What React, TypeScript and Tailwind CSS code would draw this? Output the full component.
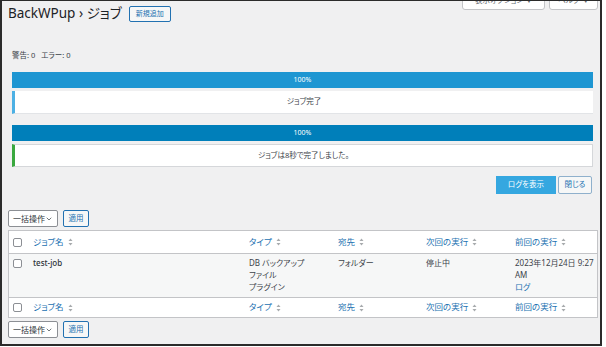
import { ChevronDown } from 'lucide-react';

const font = "font-['Noto_Sans','Noto_Sans_CJK_JP',sans-serif] [font-feature-settings:'palt']";

function SortIcon() {
  return (
    <svg width="5" height="8" viewBox="0 0 5 8" className="ml-[4px] inline-block">
      <path d="M2.5 0.5 L4.5 3 L0.5 3 Z" fill="#a7aaad" />
      <path d="M2.5 7.5 L4.5 5 L0.5 5 Z" fill="#a7aaad" />
    </svg>
  );
}

function Checkbox() {
  return <span className="block h-[9px] w-[9px] rounded-[2px] border border-[#8c8f94] bg-white" />;
}

const cols = 'grid grid-cols-[24px_216px_89px_88px_89px_1fr]';

function HeadRow({ footer }: { footer?: boolean }) {
  const heads = ['ジョブ名', 'タイプ', '宛先', '次回の実行', '前回の実行'];
  return (
    <div
      className={`${cols} items-center bg-white ${footer ? 'h-[20px] border-t border-[#c3c4c7]' : 'h-[23px] border-b border-[#c3c4c7]'}`}
    >
      <div className="flex pl-[4px]">
        <Checkbox />
      </div>
      {heads.map((h) => (
        <div key={h} className="flex items-center text-[8.5px] text-[#2271b1]">
          {h}
          <SortIcon />
        </div>
      ))}
    </div>
  );
}

function BulkActions() {
  return (
    <div className="flex h-[17px] items-stretch gap-[5px]">
      <div className="flex w-[50px] items-center justify-between rounded-[2px] border border-[#8c8f94] bg-white pl-[4px] pr-[4px] text-[8px] text-[#2c3338]">
        一括操作
        <ChevronDown size={8} strokeWidth={2} className="text-[#2c3338]" />
      </div>
      <div className="flex w-[26px] items-center justify-center rounded-[2px] border border-[#2271b1] bg-[#f6f7f7] text-[7.5px] text-[#2271b1]">
        適用
      </div>
    </div>
  );
}

export default function App() {
  return (
    <div className={`h-[347px] w-[606px] bg-white ${font}`}>
      <div className="relative flex h-[346px] w-[602px] flex-col overflow-hidden border-b-2 border-l-2 border-r-2 border-t border-[#2b2b2b] bg-[#f0f0f1] pl-[6px] pr-[2px]">
        {/* screen options / help tabs */}
        <div className="absolute right-[2px] top-[-10px] flex gap-[4px]">
          <div className="flex h-[19px] w-[83px] items-center justify-center gap-[3px] rounded-b-[3px] border border-[#c3c4c7] bg-white text-[7.5px] text-[#646970]">
            表示オプション <span className="text-[6px]">▼</span>
          </div>
          <div className="flex h-[19px] w-[49px] items-center justify-center gap-[3px] rounded-b-[3px] border border-[#c3c4c7] bg-white text-[7.5px] text-[#646970]">
            ヘルプ <span className="text-[6px]">▼</span>
          </div>
        </div>

        <div className="flex h-[26px] items-center">
          <h1 className="text-[13.5px] leading-none text-[#1d2327]">BackWPup › ジョブ</h1>
          <button className="ml-[7px] flex h-[16px] w-[42px] items-center justify-center rounded-[2px] border border-[#2271b1] bg-[#f6f7f7] text-[7px] text-[#2271b1]">
            新規追加
          </button>
        </div>

        <div className="mt-[23px] h-[10px] pl-[4px] text-[7.5px] leading-[10px] text-[#3c434a]">
          警告: 0&nbsp;&nbsp; エラー: 0
        </div>

        <div className="ml-[4px] mr-[5px] flex flex-col">
          <div className="mt-[12px] flex h-[16px] items-center justify-center bg-[#1e96d2] text-[7px] text-white">100%</div>
          <div className="mt-[3px] flex h-[23px] items-center justify-center border-b border-l-[3px] border-b-[#e2e4e7] border-l-[#4cb0e4] bg-white text-[7.5px] text-[#3c434a]">
            ジョブ完了
          </div>
          <div className="mt-[11px] flex h-[16px] items-center justify-center bg-[#007fba] text-[7px] text-white">100%</div>
          <div className="mt-[3px] flex h-[23px] items-center justify-center border border-l-[3px] border-[#d5d7da] border-l-[#3aa83f] bg-white text-[7.5px] text-[#3c434a]">
            ジョブは8秒で完了しました。
          </div>
          <div className="mt-[9px] flex h-[18px] justify-end gap-[2px] pr-[1px]">
            <div className="flex w-[60px] items-center justify-center bg-[#35a7e0] text-[7.5px] text-white">ログを表示</div>
            <div className="flex w-[34px] items-center justify-center rounded-[2px] border border-[#8fb0cc] bg-[#f6f7f7] text-[7.5px] text-[#2271b1]">
              閉じる
            </div>
          </div>
        </div>

        <div className="mt-[16px]">
          <BulkActions />
        </div>

        <div className="mt-[3px] border border-[#c3c4c7] bg-white">
          <HeadRow />
          <div className={`${cols} h-[43px] bg-[#f6f7f7] pt-[3px] text-[8px] leading-[12px] text-[#3c434a]`}>
            <div className="flex pl-[4px] pt-[2px]">
              <Checkbox />
            </div>
            <div className="font-medium text-[#2c3338]">test-job</div>
            <div>
              DB バックアップ
              <br />
              ファイル
              <br />
              プラグイン
            </div>
            <div>フォルダー</div>
            <div>停止中</div>
            <div>
              2023年12月24日 9:27
              <br />
              AM
              <br />
              <span className="text-[#2271b1]">ログ</span>
            </div>
          </div>
          <HeadRow footer />
        </div>

        <div className="mt-[3px]">
          <BulkActions />
        </div>
      </div>
    </div>
  );
}
